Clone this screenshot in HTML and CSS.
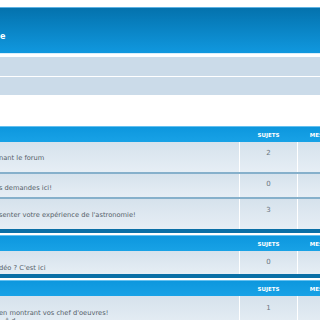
FILE: index.html
```html
<!DOCTYPE html>
<html lang="fr">

<head>
  <meta charset="UTF-8">
  <meta name="viewport" content="width=device-width, initial-scale=1.0">
  <title>Forum</title>
  <link rel="stylesheet" href="styles.css">
</head>

<body>
  <div class="banner">
    <span class="site-title">e</span>
  </div>

  <div class="nav-band"></div>
  <div class="nav-band short"></div>

  <div class="category first">
    <div class="cat-head">
      <span></span>
      <span class="col-title">Sujets</span>
      <span class="col-title">Messages</span>
      <span></span>
    </div>
    <div class="forum tall">
      <div class="forum-info"><p class="desc">nant le forum</p></div>
      <div class="count">2</div>
      <div class="count"></div>
      <div></div>
    </div>
    <div class="forum short">
      <div class="forum-info"><p class="desc">s demandes ici!</p></div>
      <div class="count">0</div>
      <div class="count"></div>
      <div></div>
    </div>
    <div class="forum tall">
      <div class="forum-info"><p class="desc">senter votre expérience de l'astronomie!</p></div>
      <div class="count">3</div>
      <div class="count"></div>
      <div></div>
    </div>
  </div>

  <div class="category">
    <div class="cat-head">
      <span></span>
      <span class="col-title">Sujets</span>
      <span class="col-title">Messages</span>
      <span></span>
    </div>
    <div class="forum short low">
      <div class="forum-info"><p class="desc">déo ? C'est ici</p></div>
      <div class="count">0</div>
      <div class="count"></div>
      <div></div>
    </div>
  </div>

  <div class="category">
    <div class="cat-head">
      <span></span>
      <span class="col-title">Sujets</span>
      <span class="col-title">Messages</span>
      <span></span>
    </div>
    <div class="forum tall low">
      <div class="forum-info">
        <p class="desc">en montrant vos chef d'oeuvres!</p>
        <p class="desc sub">ê d</p>
      </div>
      <div class="count">1</div>
      <div class="count"></div>
      <div></div>
    </div>
  </div>
</body>

</html>
```

FILE: styles.css
```css
html,
body {
  overflow: hidden;
}

body {
  font-family: 'DejaVu Sans', Verdana, sans-serif;
  background-color: #fff;
  margin: 0;
  padding: 7px 0 0;
  width: 420px;
}

.banner {
  height: 47px;
  border-top: 1px solid #5eb2e3;
  border-bottom: 1px solid #d9eefa;
  background: linear-gradient(#0472ad, #1098df);
  display: flex;
  align-items: center;
  padding-top: 12px;
  box-sizing: border-box;
}

.site-title {
  color: #fff;
  font-size: 8px;
  font-weight: bold;
}

.nav-band {
  height: 19px;
  margin-top: 3px;
  background-color: #cbdbe9;
}

.nav-band.short {
  height: 18px;
  margin-top: 1px;
}

.category {
  margin-top: 2px;
  border-bottom: 4px solid #0a6fa6;
}

.category.first {
  margin-top: 31px;
}

.cat-head,
.forum {
  display: grid;
  grid-template-columns: 239px 57px 57px 1fr;
  column-gap: 1px;
}

.cat-head {
  height: 15px;
  border-top: 1px solid #64c0ef;
  background: linear-gradient(#0d97de, #18a2e6);
  align-items: center;
}

.col-title {
  color: #fff;
  font-size: 5.5px;
  font-weight: bold;
  text-transform: uppercase;
  text-align: center;
  padding-top: 1px;
}

.forum {
  background-color: #fff;
  border-bottom: 2px solid #86b0cb;
}

.forum:last-child {
  border-bottom: none;
}

.forum > div {
  background: linear-gradient(#d6e2ec, #e6eef5);
}

.forum.tall {
  height: 30px;
}

.forum.short {
  height: 23px;
}

.forum-info {
  padding-top: 12px;
  box-sizing: border-box;
}

.forum.short .forum-info {
  padding-top: 10px;
}

.forum.low .forum-info {
  padding-top: 13px;
}

.desc {
  margin: 0;
  font-size: 6.7px;
  line-height: 8px;
  color: #555f69;
  text-indent: -1px;
}

.desc.sub {
  text-indent: 5px;
}

.count {
  font-size: 7px;
  color: #6b7580;
  text-align: center;
  padding-top: 7px;
  box-sizing: border-box;
}

.forum.short .count {
  padding-top: 6px;
}

.forum.low .count {
  padding-top: 7px;
}

.forum.tall.low .count {
  padding-top: 8px;
}
```
